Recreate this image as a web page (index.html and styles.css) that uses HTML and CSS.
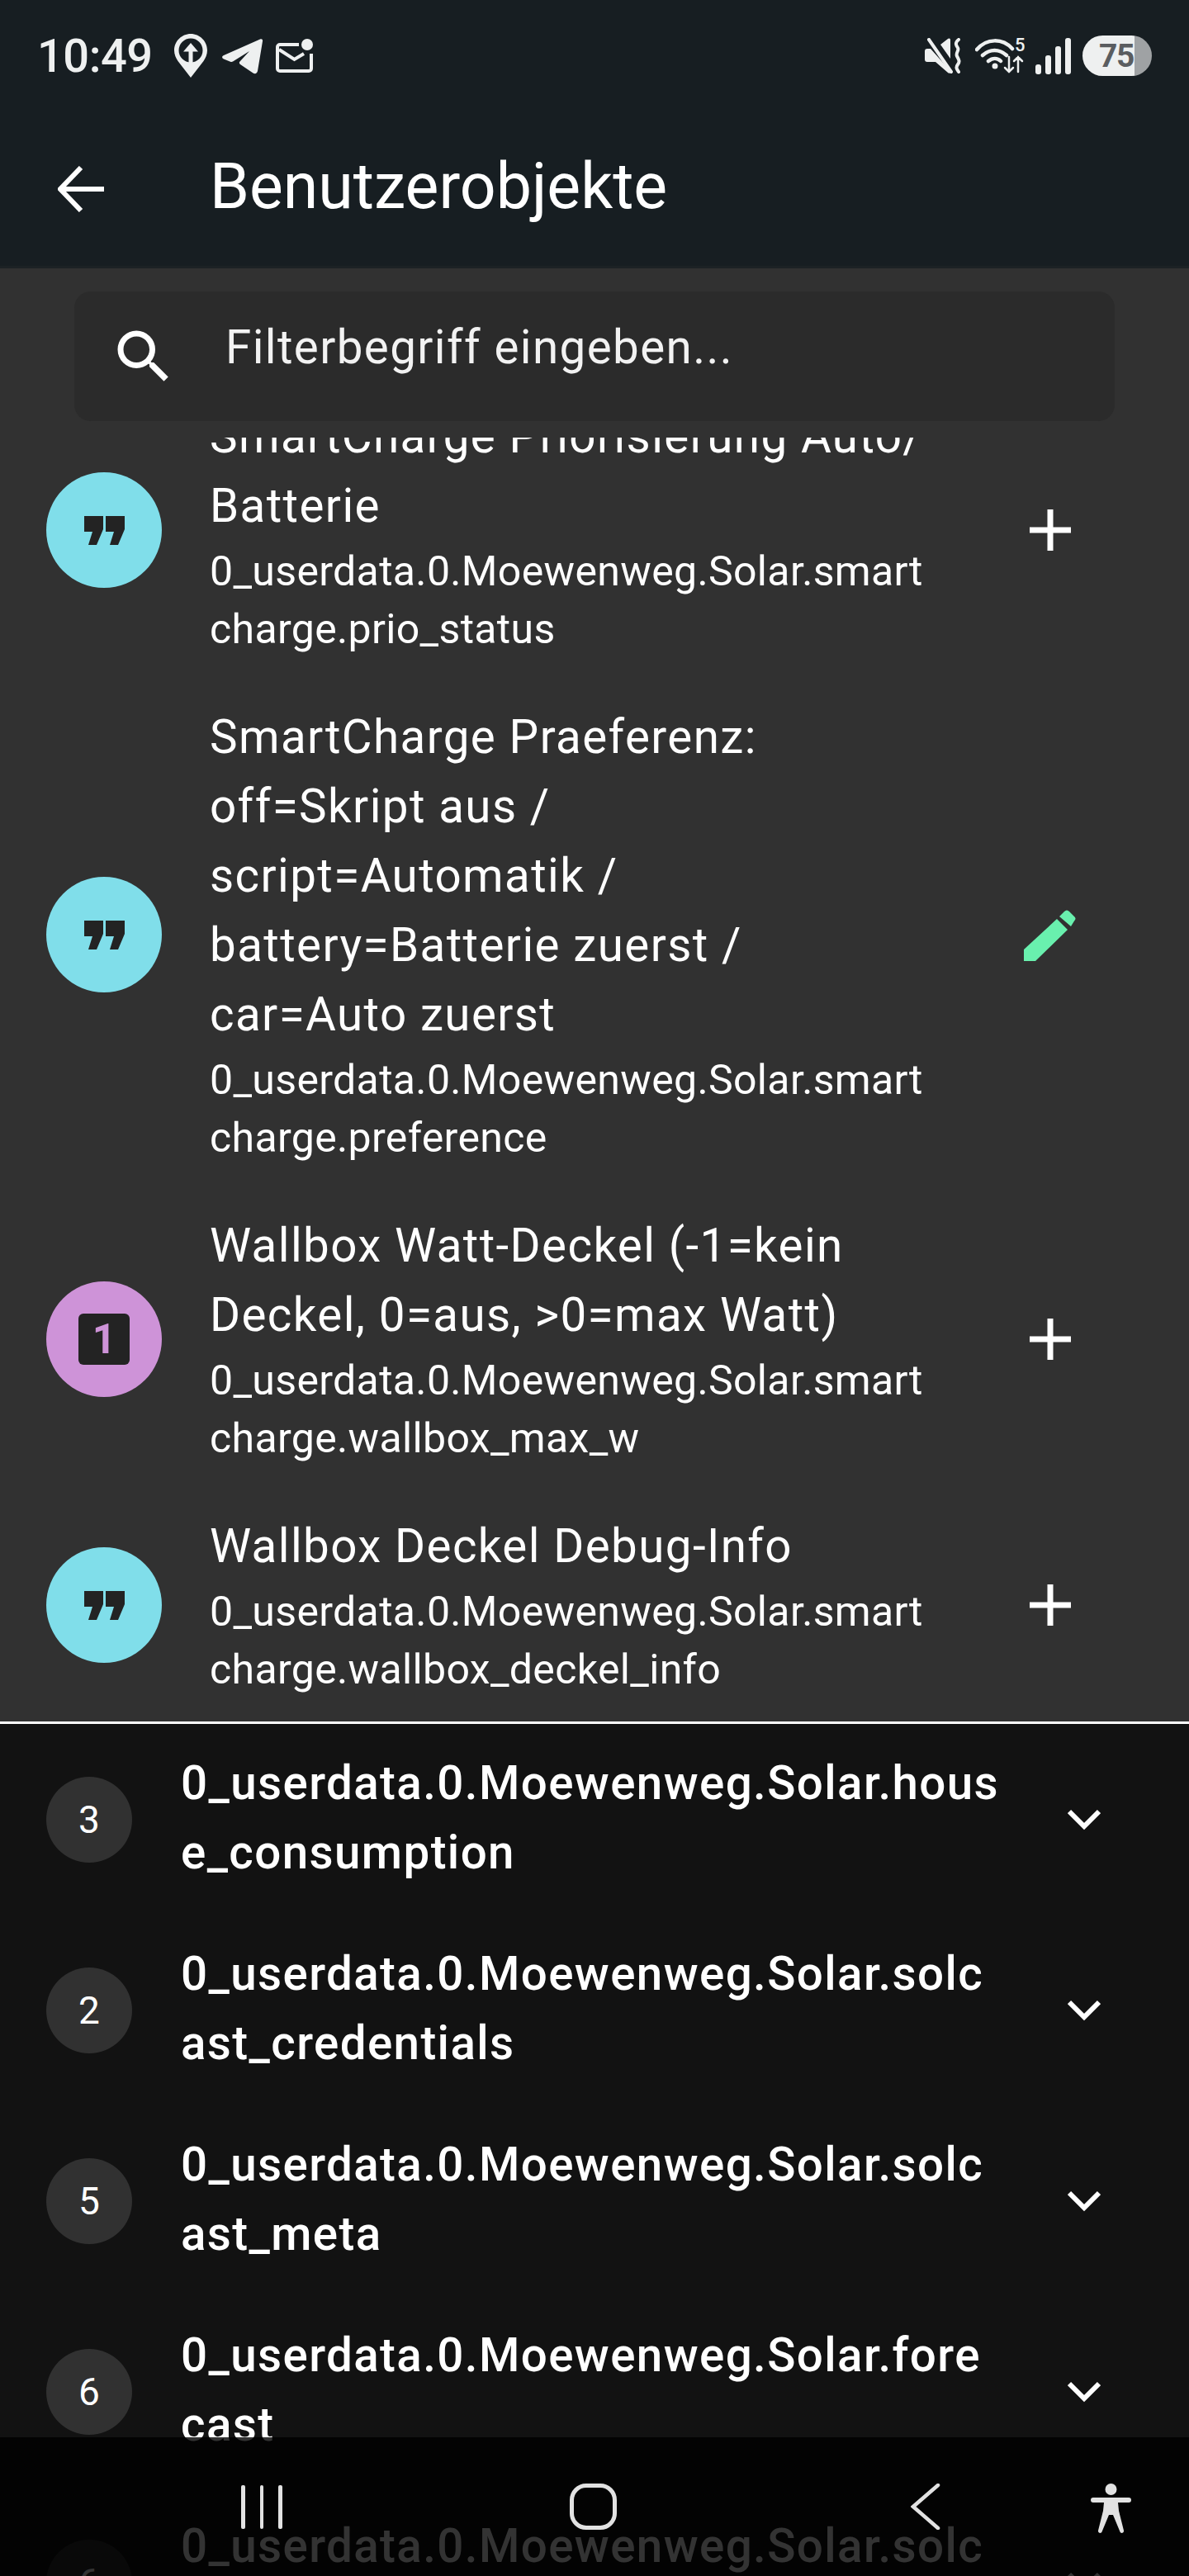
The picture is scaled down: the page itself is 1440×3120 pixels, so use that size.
FILE: index.html
```html
<!DOCTYPE html>
<html lang="en">
<head>
    <meta charset="UTF-8">
    <meta name="viewport" content="width=device-width, initial-scale=1.0">
    <title>Benutzerobjekte</title>
    <link rel="stylesheet" href="styles.css">
</head>
<body>
    <div class="screen">
        <header class="top">
            <div class="status">
                <div class="status-left">
                    <span class="clock">10:49</span>
                    <svg class="st-pin" viewBox="0 0 40 53"><path fill="#eef0f0" fill-rule="evenodd" d="M20 0c11 0 20 9 20 20 0 5-2 9-4.500 13L20 53 4.500 33C2 29 0 25 0 20 0 9 9 0 20 0zm0 5.500a14.500 14.500 0 1 0 0 29 14.500 14.500 0 0 0 0-29z"/><path fill="#eef0f0" d="M20 11l9 10.500h-6.500V35h-5V21.500H11z"/></svg>
                    <svg class="st-plane" viewBox="0 0 50 44"><path fill="#eef0f0" d="M46 1.500c2-1 3.500.3 3 2.500L43 40c-.6 3-3 4-5.500 2.500L22 32c-1.500-1-1.500-2.500-.5-3.500L33 16 13 28.500c-1 .6-2 .5-3 .2L2 25.500c-2.500-1-2.500-3.500 0-4.500z"/></svg>
                    <svg class="st-mail" viewBox="0 0 45 41"><path fill="none" stroke="#eef0f0" stroke-width="4" d="M28 7H5a3 3 0 0 0-3 3v26a3 3 0 0 0 3 3h35a3 3 0 0 0 3-3V18M4 13l18.500 12L34 18"/><circle cx="38" cy="7" r="7" fill="#eef0f0"/></svg>
                </div>
                <div class="status-right">
                    <svg class="st-mute" viewBox="0 0 46 43"><path fill="#eef0f0" d="M0 16c0-2 1-3 3-3h4l25 28c-1 2-3 2-4 1L13 29H3c-2 0-3-1-3-3zM19 8l9-7c1-1 3-.5 3 1v23z"/><path fill="none" stroke="#eef0f0" stroke-width="4" stroke-linecap="round" d="M5 2l27 39M41 2c-5 4-3 7-1 10s-3 6-1 10 4 6 1 10-1 6 1 9"/></svg>
                    <svg class="st-wifi" viewBox="0 0 60 43"><path fill="none" stroke="#eef0f0" stroke-width="4.500" stroke-linecap="round" d="M2 14C14 0 33 0 45 13M9 21c9-8 20-8 29 0M16 28c5-4 11-4 15 0"/><circle cx="24" cy="34" r="3.500" fill="#eef0f0"/><path fill="none" stroke="#eef0f0" stroke-width="2.500" stroke-linecap="round" d="M41 23v18M36 36l5 5 5-5M52 41V23M47 28l5-5 5 5"/><text x="48" y="16" class="st-five">5</text></svg>
                    <div class="signal">
                        <span class="bar bar-1"></span><span class="bar bar-2"></span><span class="bar bar-3"></span><span class="bar bar-4"></span>
                    </div>
                    <div class="battery"><span class="battery-num">75</span></div>
                </div>
            </div>
            <div class="appbar">
                <svg class="back" viewBox="0 0 56 56"><path fill="none" stroke="#fff" stroke-width="6" d="M56 28H4M28 2L3 28l25 26"/></svg>
                <h1>Benutzerobjekte</h1>
            </div>
        </header>

        <div class="search-wrap">
            <div class="search">
                <svg class="search-icon" viewBox="0 0 24 24"><path fill="#fff" d="M15.500 14h-.79l-.28-.27A6.470 6.470 0 0 0 16 9.500 6.500 6.500 0 1 0 9.500 16c1.610 0 3.090-.59 4.230-1.570l.27.280v.79l5 4.990L20.490 19l-4.990-5zm-6 0C7.010 14 5 11.990 5 9.500S7.010 5 9.500 5 14 7.010 14 9.500 11.990 14 9.500 14z"/></svg>
                <span class="search-text">Filterbegriff eingeben...</span>
            </div>
        </div>

        <section class="objects">
            <div class="object first">
                <div class="badge badge-text"><svg viewBox="0 0 49 35"><path d="M0 0h23v16L15 35H5l5-16H0zM26 0h23v16L41 35H31l5-16H26z"/></svg></div>
                <div class="object-body">
                    <div class="name">SmartCharge Priorisierung Auto/<br>Batterie</div>
                    <div class="path">0_userdata.0.Moewenweg.Solar.smart<br>charge.prio_status</div>
                </div>
                <svg class="action plus" viewBox="0 0 50 50"><path fill="none" stroke="#fff" stroke-width="7" d="M0 25h50M25 0v50"/></svg>
            </div>
            <div class="object">
                <div class="badge badge-text"><svg viewBox="0 0 49 35"><path d="M0 0h23v16L15 35H5l5-16H0zM26 0h23v16L41 35H31l5-16H26z"/></svg></div>
                <div class="object-body">
                    <div class="name">SmartCharge Praeferenz:<br>off=Skript aus /<br>script=Automatik /<br>battery=Batterie zuerst /<br>car=Auto zuerst</div>
                    <div class="path">0_userdata.0.Moewenweg.Solar.smart<br>charge.preference</div>
                </div>
                <svg class="action pencil" viewBox="0 0 63 63"><path fill="#69f0ae" d="M0 63V49L40 12l13 13-39 38zM43 9l6-6c2-2 4-2 6 0l6 6c2 2 2 3.500 0 5.500L57 21z"/></svg>
            </div>
            <div class="object">
                <div class="badge badge-number"><span class="number-box">1</span></div>
                <div class="object-body">
                    <div class="name">Wallbox Watt-Deckel (-1=kein<br>Deckel, 0=aus, &gt;0=max Watt)</div>
                    <div class="path">0_userdata.0.Moewenweg.Solar.smart<br>charge.wallbox_max_w</div>
                </div>
                <svg class="action plus" viewBox="0 0 50 50"><path fill="none" stroke="#fff" stroke-width="7" d="M0 25h50M25 0v50"/></svg>
            </div>
            <div class="object">
                <div class="badge badge-text"><svg viewBox="0 0 49 35"><path d="M0 0h23v16L15 35H5l5-16H0zM26 0h23v16L41 35H31l5-16H26z"/></svg></div>
                <div class="object-body">
                    <div class="name">Wallbox Deckel Debug-Info</div>
                    <div class="path">0_userdata.0.Moewenweg.Solar.smart<br>charge.wallbox_deckel_info</div>
                </div>
                <svg class="action plus" viewBox="0 0 50 50"><path fill="none" stroke="#fff" stroke-width="7" d="M0 25h50M25 0v50"/></svg>
            </div>
        </section>

        <section class="groups">
            <div class="group">
                <div class="count">3</div>
                <div class="group-name">0_userdata.0.Moewenweg.Solar.hous<br>e_consumption</div>
                <svg class="chevron" viewBox="0 0 40 26"><path fill="none" stroke="#fff" stroke-width="6" d="M2 3l18 18L38 3"/></svg>
            </div>
            <div class="group">
                <div class="count">2</div>
                <div class="group-name">0_userdata.0.Moewenweg.Solar.solc<br>ast_credentials</div>
                <svg class="chevron" viewBox="0 0 40 26"><path fill="none" stroke="#fff" stroke-width="6" d="M2 3l18 18L38 3"/></svg>
            </div>
            <div class="group">
                <div class="count">5</div>
                <div class="group-name">0_userdata.0.Moewenweg.Solar.solc<br>ast_meta</div>
                <svg class="chevron" viewBox="0 0 40 26"><path fill="none" stroke="#fff" stroke-width="6" d="M2 3l18 18L38 3"/></svg>
            </div>
            <div class="group">
                <div class="count">6</div>
                <div class="group-name">0_userdata.0.Moewenweg.Solar.fore<br>cast</div>
                <svg class="chevron" viewBox="0 0 40 26"><path fill="none" stroke="#fff" stroke-width="6" d="M2 3l18 18L38 3"/></svg>
            </div>
            <div class="group">
                <div class="count">6</div>
                <div class="group-name">0_userdata.0.Moewenweg.Solar.solc<br>&nbsp;</div>
                <svg class="chevron" viewBox="0 0 40 26"><path fill="none" stroke="#fff" stroke-width="6" d="M2 3l18 18L38 3"/></svg>
            </div>
        </section>

        <nav class="navbar">
            <div class="nav-recent"><span></span><span></span><span></span></div>
            <div class="nav-home"></div>
            <svg class="nav-back" viewBox="0 0 36 56"><path fill="none" stroke="#e2e2e2" stroke-width="4.500" stroke-linecap="round" d="M33 2L3 28l30 26"/></svg>
            <svg class="nav-access" viewBox="0 0 49 60"><circle cx="24.500" cy="7" r="7" fill="#e2e2e2"/><path fill="#e2e2e2" d="M3 17h43a3 3 0 0 1 0 6H33l1 10 6 24c.5 3-3.500 4-4.500 1.500L27 38h-5l-8.500 20.500C12.500 61 8.500 60 9 57l6-24 1-10H3a3 3 0 0 1 0-6z"/></svg>
        </nav>
    </div>
</body>
</html>
```

FILE: styles.css
```css
body {
    margin: 0;
    background: #000;
    font-family: Roboto, "Liberation Sans", sans-serif;
    color: #fff;
}

.screen {
    position: relative;
    width: 1440px;
    height: 3120px;
    overflow: hidden;
    display: flex;
    flex-direction: column;
}

/* top bars */
.top {
    height: 322px;
    background: #171e22;
    border-bottom: 3px solid #1c2225;
    flex: none;
}

.status {
    height: 135px;
    display: flex;
    justify-content: space-between;
    align-items: center;
    padding: 0 45px 0 45px;
}

.status-left,
.status-right {
    display: flex;
    align-items: center;
}

.clock {
    font-size: 56px;
    font-weight: 500;
    letter-spacing: -.5px;
    color: #eef0f0;
    margin-right: 26px;
}

.st-pin { width: 40px; height: 53px; margin-right: 18px; }
.st-plane { width: 50px; height: 44px; margin-right: 15px; }
.st-mail { width: 45px; height: 41px; }
.st-mute { width: 46px; height: 43px; margin-right: 15px; }
.st-wifi { width: 60px; height: 43px; margin-right: 13px; }
.st-five { font-size: 22px; font-weight: 500; fill: #eef0f0; }

.signal {
    display: flex;
    align-items: flex-end;
    gap: 5px;
    height: 44px;
    margin-right: 14px;
}

.bar {
    width: 7px;
    border-radius: 3px;
    background: #eef0f0;
}

.bar-1 { height: 12px; }
.bar-2 { height: 23px; }
.bar-3 { height: 34px; }
.bar-4 { height: 44px; }

.battery {
    width: 84px;
    height: 49px;
    border-radius: 25px;
    background: linear-gradient(90deg, #eef0f0 75%, #9fa2a4 75%);
    display: flex;
    align-items: center;
    padding-left: 20px;
    box-sizing: border-box;
}

.battery-num {
    font-size: 39px;
    font-weight: 700;
    color: #5a5d60;
    letter-spacing: -1.500px;
}

.appbar {
    height: 187px;
    display: flex;
    align-items: center;
    padding-left: 70px;
}

.back {
    width: 56px;
    height: 56px;
    margin-right: 128px;
}

h1 {
    margin: 0 0 6px;
    font-size: 77px;
    font-weight: 400;
}

/* search */
.search-wrap {
    flex: none;
    background: #313131;
    padding: 28px 90px 20px;
}

.search {
    height: 157px;
    box-sizing: border-box;
    border-radius: 20px;
    background: #2b2b2b;
    display: flex;
    align-items: center;
    padding-left: 42px;
}

.search-icon {
    width: 84px;
    height: 84px;
    margin-right: 57px;
}

.search-text {
    font-size: 56.500px;
    letter-spacing: 1.400px;
    color: #f2f2f2;
    margin-bottom: 22px;
}

/* object list */
.objects {
    height: 1555px;
    flex: none;
    overflow: hidden;
    background: #313131;
    border-bottom: 3px solid #fff;
}

.object {
    display: flex;
    align-items: center;
    padding-left: 56px;
    margin-bottom: 54px;
}

.object.first {
    margin-top: -43px;
}

.badge {
    width: 140px;
    height: 140px;
    flex: none;
    border-radius: 50%;
    display: flex;
    align-items: center;
    justify-content: center;
    margin-right: 58px;
}

.badge-text { background: #80deea; }
.badge-number { background: #ce93d8; }

.badge-text svg {
    width: 49px;
    height: 35px;
    fill: #232323;
}

.number-box {
    width: 62px;
    height: 62px;
    border-radius: 6px;
    background: #232323;
    color: #ce93d8;
    font-size: 50px;
    font-weight: 700;
    line-height: 62px;
    text-align: center;
}

.object-body {
    width: 930px;
    flex: none;
}

.name {
    font-size: 56.500px;
    line-height: 84px;
    letter-spacing: 1.400px;
}

.path {
    font-size: 50px;
    line-height: 70px;
    letter-spacing: .34px;
    margin-top: 2px;
}

.action {
    margin-left: 63px;
}

.plus { width: 50px; height: 50px; }
.pencil { width: 63px; height: 63px; margin-left: 56px; }

/* groups below the list */
.groups {
    flex: 1;
    background: #121212;
}

.group {
    height: 231px;
    display: flex;
    align-items: center;
    padding-left: 56px;
    box-sizing: border-box;
}

.count {
    width: 104px;
    height: 104px;
    flex: none;
    border-radius: 50%;
    background: #313131;
    display: flex;
    align-items: center;
    justify-content: center;
    font-size: 46px;
    margin-right: 59px;
}

.group-name {
    width: 1074px;
    flex: none;
    font-size: 56.500px;
    font-weight: 500;
    line-height: 84px;
    letter-spacing: 1.400px;
    padding-bottom: 4px;
}

.chevron {
    width: 40px;
    height: 26px;
    flex: none;
}

/* system nav lies over the list */
.navbar {
    position: absolute;
    left: 0;
    right: 0;
    bottom: 0;
    height: 168px;
    background: rgba(0, 0, 0, .8);
    display: flex;
    align-items: flex-start;
    padding-top: 56px;
    box-sizing: border-box;
}

.nav-recent {
    display: flex;
    gap: 18px;
    margin-left: 292px;
    margin-top: 2px;
}

.nav-recent span {
    width: 4.500px;
    height: 53px;
    border-radius: 2px;
    background: #e2e2e2;
}

.nav-home {
    width: 57px;
    height: 56px;
    box-sizing: border-box;
    border: 5px solid #e2e2e2;
    border-radius: 20px;
    margin-left: 348px;
}

.nav-back {
    width: 36px;
    height: 56px;
    margin-left: 356px;
}

.nav-access {
    width: 49px;
    height: 60px;
    margin-left: 182px;
}
```
